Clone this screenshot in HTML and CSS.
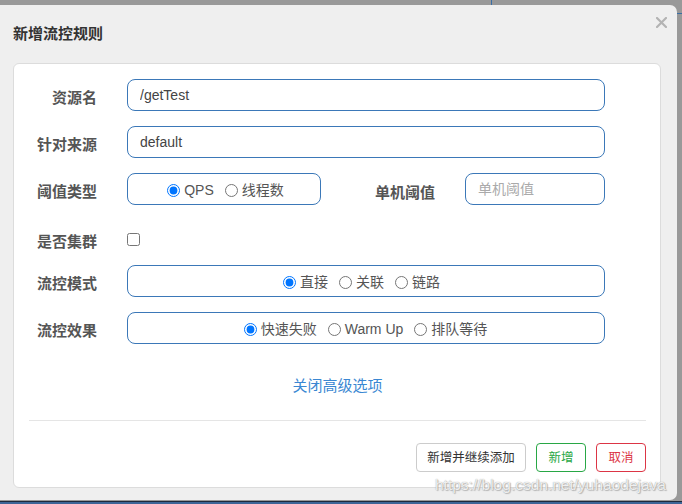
FILE: index.html
```html
<!DOCTYPE html>
<html lang="zh">
<head>
<meta charset="utf-8">
<title>新增流控规则</title>
<link rel="stylesheet" href="styles.css">
</head>
<body>
<div class="screen">
  <div class="topline"></div>
  <div class="modal">
    <div class="modal-header">
      <h4 class="modal-title">新增流控规则</h4>
      <span class="close" aria-label="close">
        <svg width="11" height="11" viewBox="0 0 11 11"><path d="M1 1 L10 10 M10 1 L1 10" stroke="#b3b3b3" stroke-width="2.2" stroke-linecap="round"/></svg>
      </span>
    </div>
    <div class="card">
      <form class="form">
        <div class="row">
          <label class="lbl">资源名</label>
          <div class="field"><input class="ctl" type="text" value="/getTest"></div>
        </div>
        <div class="row">
          <label class="lbl">针对来源</label>
          <div class="field"><input class="ctl" type="text" value="default"></div>
        </div>
        <div class="row">
          <label class="lbl">阈值类型</label>
          <div class="field split">
            <div class="radio-box small">
              <label class="opt"><input type="radio" name="g" checked>QPS</label>
              <label class="opt"><input type="radio" name="g">线程数</label>
            </div>
            <label class="lbl2">单机阈值</label>
            <input class="ctl short" type="text" placeholder="单机阈值">
          </div>
        </div>
        <div class="row check-row">
          <label class="lbl">是否集群</label>
          <div class="field"><input class="chk" type="checkbox"></div>
        </div>
        <div class="row">
          <label class="lbl">流控模式</label>
          <div class="field">
            <div class="radio-box mode">
              <label class="opt"><input type="radio" name="m" checked>直接</label>
              <label class="opt"><input type="radio" name="m">关联</label>
              <label class="opt"><input type="radio" name="m">链路</label>
            </div>
          </div>
        </div>
        <div class="row">
          <label class="lbl">流控效果</label>
          <div class="field">
            <div class="radio-box effect">
              <label class="opt"><input type="radio" name="e" checked>快速失败</label>
              <label class="opt"><input type="radio" name="e">Warm Up</label>
              <label class="opt"><input type="radio" name="e">排队等待</label>
            </div>
          </div>
        </div>
        <div class="adv"><a class="link" href="#">关闭高级选项</a></div>
      </form>
      <div class="hr"></div>
      <div class="footer">
        <button class="btn wide">新增并继续添加</button>
        <button class="btn green">新增</button>
        <button class="btn red">取消</button>
      </div>
      <div class="watermark">https://blog.csdn.net/yuhaodejava</div>
    </div>
  </div>
  <div class="taskbar"></div>
</div>
</body>
</html>
```

FILE: styles.css
```css
* { box-sizing: border-box; }
html, body { margin: 0; padding: 0; }
body {
  width: 682px;
  height: 504px;
  overflow: hidden;
  background: #999999;
  font-family: "Liberation Sans", "Noto Sans CJK SC", sans-serif;
  color: #555;
}
.screen {
  position: relative;
  width: 682px;
  height: 504px;
  display: flex;
  flex-direction: column;
  background:
    linear-gradient(#3a6ea5, #3a6ea5) 677px 13px / 5px 1px no-repeat,
    #999999;
}
.topline {
  height: 5px;
  background: linear-gradient(#3a6ea5, #3a6ea5) 491px 0 / 1px 5px no-repeat;
}
.modal {
  position: relative;
  width: 677px;
  height: 495px;
  background: #efefef;
  border-radius: 0 7px 7px 0;
  display: flex;
  flex-direction: column;
  padding: 0 16px 12px 13px;
}
.modal-header {
  height: 58px;
  display: flex;
  align-items: center;
  justify-content: space-between;
  padding-bottom: 1px;
}
.modal-title {
  margin: 0;
  font-size: 15px;
  font-weight: bold;
  color: #333;
  line-height: 20px;
  font-family: "Noto Sans CJK SC", sans-serif;
  margin-top: -1px;
}
.close {
  display: flex;
  margin-right: -6px;
  margin-top: -23px;
}
.card {
  position: relative;
  flex: 1;
  background: #fff;
  border: 1px solid #dcdcdc;
  border-radius: 6px;
  display: flex;
  flex-direction: column;
  padding: 15px 14px 0 15px;
}
.form {
  display: flex;
  flex-direction: column;
  gap: 15px;
  margin: 0;
}
.row {
  display: flex;
  align-items: center;
  height: 32px;
}
.check-row { height: 31px; padding-top: 8px; margin-bottom: -1px; }
.lbl {
  width: 83px;
  text-align: right;
  font-weight: bold;
  font-size: 15px;
  color: #555;
  font-family: "Noto Sans CJK SC", sans-serif;
  line-height: 20px;
  margin-left: -15px;
  padding-top: 4px;
}
.check-row .lbl { padding-top: 2px; }
.field {
  margin-left: 30px;
  width: 478px;
  height: 100%;
  display: flex;
  align-items: center;
}
.check-row .field { height: auto; }
.ctl {
  width: 100%;
  height: 32px;
  border: 1px solid #3b78b8;
  border-radius: 8px;
  padding: 0 12px;
  font-size: 14px;
  color: #444;
  font-family: "Liberation Sans", "Noto Sans CJK SC", sans-serif;
  outline: none;
  background: #fff;
}
.ctl::placeholder { color: #aaa; }
.split { justify-content: flex-start; }
.radio-box {
  width: 100%;
  height: 32px;
  border: 1px solid #3b78b8;
  border-radius: 8px;
  display: flex;
  align-items: center;
  justify-content: center;
}
.radio-box.small { width: 194px; flex: none; }
.radio-box.mode { padding-right: 12px; }
.radio-box.effect { padding-right: 4px; }
.lbl2 {
  flex: 1;
  text-align: right;
  font-weight: bold;
  font-size: 15px;
  color: #555;
  font-family: "Noto Sans CJK SC", sans-serif;
  padding-top: 4px;
}
.ctl.short { width: 140px; flex: none; margin-left: 30px; }
.opt {
  display: inline-flex;
  align-items: center;
  font-size: 14px;
  color: #555;
  font-family: "Liberation Sans", "Noto Sans CJK SC", sans-serif;
  margin-right: 8px;
  line-height: 18px;
  padding-top: 2px;
}
.opt:last-child { margin-right: 0; }
.opt input {
  width: 13px;
  height: 13px;
  margin: 0 4px 0 3px;
}
.chk {
  width: 13px;
  height: 13px;
  margin: 0;
}
.adv {
  text-align: center;
  margin-top: 16px;
}
.link {
  color: #3a87d2;
  text-decoration: none;
  font-size: 15px;
  font-family: "Noto Sans CJK SC", sans-serif;
  line-height: 20px;
}
.hr {
  height: 1px;
  background: #e5e5e5;
  margin: 25px 0 0 0;
}
.footer {
  display: flex;
  justify-content: flex-end;
  gap: 10px;
  margin-top: 22px;
}
.btn {
  height: 29px;
  border: 1px solid #ccc;
  border-radius: 4px;
  background: #fff;
  font-size: 12.5px;
  color: #333;
  font-family: "Noto Sans CJK SC", sans-serif;
  padding: 0;
  line-height: 1;
}
.btn.wide { width: 110px; }
.btn.green { border-color: #28a745; color: #28a745; width: 50px; }
.btn.red { border-color: #dc3545; color: #dc3545; width: 50px; }
.watermark {
  position: absolute;
  left: 421px;
  top: 412px;
  font-size: 15.5px;
  font-family: "Liberation Sans", sans-serif;
  color: rgba(255,255,255,0.85);
  text-shadow: 0 0 1px rgba(120,120,120,0.8), 1px 1px 1px rgba(150,150,150,0.6);
}
.taskbar {
  flex: 1;
  border-top: 1px solid #1e2a3c;
  background: #3d6597;
  margin-top: 1px;
}
```
